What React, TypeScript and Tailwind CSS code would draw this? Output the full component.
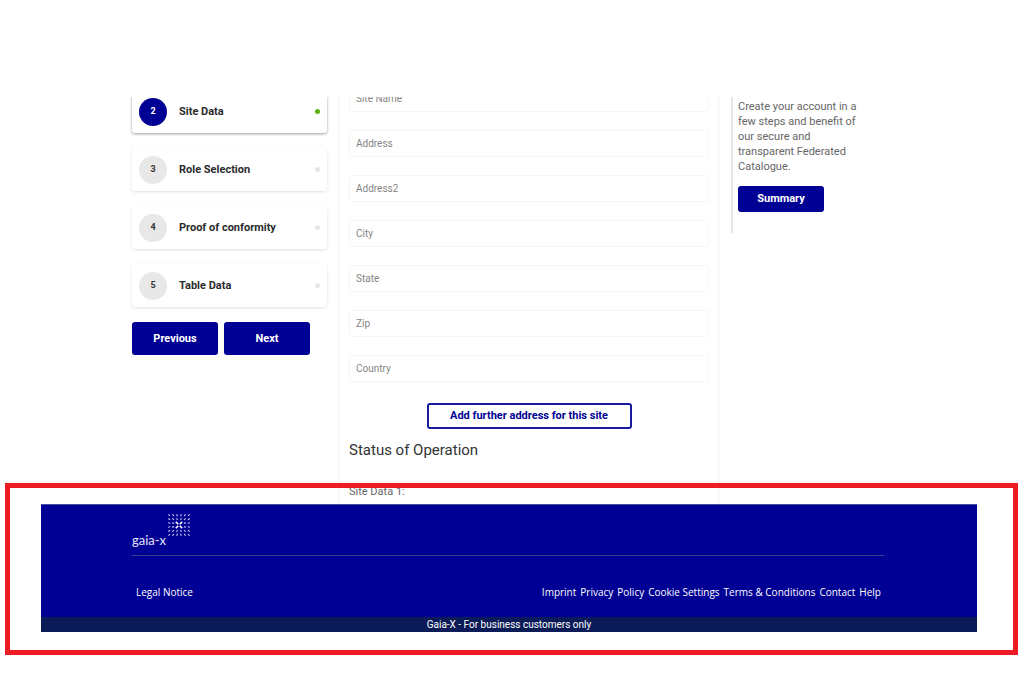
import React from "react";

type Step = { number: number; label: string; active?: boolean };

const steps: Step[] = [
  { number: 2, label: "Site Data", active: true },
  { number: 3, label: "Role Selection" },
  { number: 4, label: "Proof of conformity" },
  { number: 5, label: "Table Data" },
];

const fields = ["Site Name", "Address", "Address2", "City", "State", "Zip", "Country"];

const footerLinks = [
  "Imprint",
  "Privacy",
  "Policy",
  "Cookie Settings",
  "Terms & Conditions",
  "Contact",
  "Help",
];

function StepCard({ number, label, active }: Step) {
  return (
    <li
      className={
        active
          ? "flex h-[43px] items-center rounded-[3px] bg-white px-[7px] shadow-[0_1px_3px_rgba(0,0,0,0.38)]"
          : "flex h-[43px] items-center rounded-[3px] bg-white px-[7px] shadow-[0_1px_3px_rgba(0,0,0,0.12)]"
      }
    >
      <span
        className={
          active
            ? "flex size-7 items-center justify-center rounded-full bg-[#000094] text-[9px] font-bold text-white"
            : "flex size-7 items-center justify-center rounded-full bg-[#e8e8e8] text-[9px] font-bold text-[#333]"
        }
      >
        {number}
      </span>
      <span className="ml-3 flex-1 text-[11px] leading-4 font-bold text-[#2b2b2b]">{label}</span>
      <span
        className={active ? "size-[5px] rounded-full bg-[#5cb317]" : "size-[5px] rounded-full bg-[#e6e6e6]"}
      />
    </li>
  );
}

const dots = [0, 1, 2, 3, 4, 5];

function LogoMark() {
  return (
    <svg viewBox="0 0 22 22" className="size-[22px]" aria-hidden="true">
      {dots.map((row) =>
        dots.map((col) => {
          const x = 1.2 + col * 3.92;
          const y = 1.2 + row * 3.92;
          const center = (row === 2 || row === 3) && (col === 2 || col === 3);
          const length = Math.hypot(x - 11, y - 11);
          const r = center ? 1.7 : 1.1;
          const dx = ((x - 11) / length) * r;
          const dy = ((y - 11) / length) * r;
          return (
            <line
              key={`${row}-${col}`}
              x1={x - dx}
              y1={y - dy}
              x2={x + dx}
              y2={y + dy}
              stroke="#fff"
              strokeWidth={center ? 1.6 : 1.1}
              strokeOpacity={center ? 1 : 0.8}
            />
          );
        }),
      )}
    </svg>
  );
}

export default function App() {
  return (
    <div className="bg-white pt-[97px] pr-[47px] pb-[47px] pl-[41px] font-['Roboto',sans-serif] text-[#666]">
      <main className="overflow-hidden pr-[93px] pl-[91px]">
        <div className="-mx-1 -mt-3 grid grid-cols-[195px_1fr_153px] gap-x-[11px] px-1">
          <section aria-label="Steps" className="pt-[5px]">
            <ol className="flex flex-col gap-[15px]">
              {steps.map((step) => (
                <StepCard key={step.number} {...step} />
              ))}
            </ol>
            <div className="mt-[15px] flex gap-[6px]">
              <button type="button" className="h-[33px] w-[86px] rounded-[3px] bg-[#000094] text-[11px] leading-4 font-bold text-white">
                Previous
              </button>
              <button type="button" className="h-[33px] w-[86px] rounded-[3px] bg-[#000094] text-[11px] leading-4 font-bold text-white">
                Next
              </button>
            </div>
          </section>

          <form className="border-x-2 border-[#f8f8f8] px-[9px]">
            <div className="flex flex-col gap-[18px]">
              {fields.map((field) => (
                <input
                  key={field}
                  type="text"
                  aria-label={field}
                  placeholder={field}
                  className="h-[27px] w-full rounded-[3px] border border-[#f6f6f6] px-[6px] text-[10px] text-[#444] placeholder:text-[#858585]"
                />
              ))}
            </div>
            <div className="mt-[21px] flex justify-center">
              <button
                type="button"
                className="h-[26px] w-[205px] rounded-[3px] border-2 border-[#1a1a9f] text-[11px] leading-4 font-bold text-[#000094]"
              >
                Add further address for this site
              </button>
            </div>
            <h2 className="mt-[11px] text-[15px] leading-5 text-[#333]">Status of Operation</h2>
            <p className="mt-6 pb-1 text-[11px] leading-4">Site Data 1:</p>
          </form>

          <aside className="h-[148px] border-l-2 border-[#e6e6e6] pt-[14px] pl-[5px]">
            <p className="w-[130px] text-[11px] leading-[15px]">
              Create your account in a few steps and benefit of our secure and transparent Federated Catalogue.
            </p>
            <button type="button" className="mt-3 h-[26px] w-[86px] rounded-[3px] bg-[#000094] text-[11px] leading-4 font-bold text-white">
              Summary
            </button>
          </aside>
        </div>
      </main>

      <footer className="relative bg-[#000094] text-white">
        <div className="h-[113px] border-t border-[#4b4ba0] pt-[9px] pr-[93px] pl-[91px]">
          <div className="flex h-[42px] items-start border-b border-[#3c3c8c]">
            <span className="mt-[18px] w-9 font-['Lato',sans-serif] text-[13px] leading-4 text-[#e4e4f6]">gaia-x</span>
            <LogoMark />
          </div>
          <nav
            aria-label="Footer"
            className="mt-7 flex justify-between pr-[3px] pl-1 font-['Open_Sans',sans-serif] text-[10px] leading-4"
          >
            <a href="#legal-notice">Legal Notice</a>
            <ul className="flex gap-1">
              {footerLinks.map((link) => (
                <li key={link}>
                  <a href="#footer">{link}</a>
                </li>
              ))}
            </ul>
          </nav>
        </div>
        <p className="bg-[#0b1b57] text-center text-[10px] leading-[15px]">
          Gaia-X - For business customers only
        </p>
        <div
          aria-hidden="true"
          className="pointer-events-none absolute -top-[21px] -right-[41px] -bottom-[23px] -left-[36px] border-5 border-[#ed1c24]"
        />
      </footer>
    </div>
  );
}
